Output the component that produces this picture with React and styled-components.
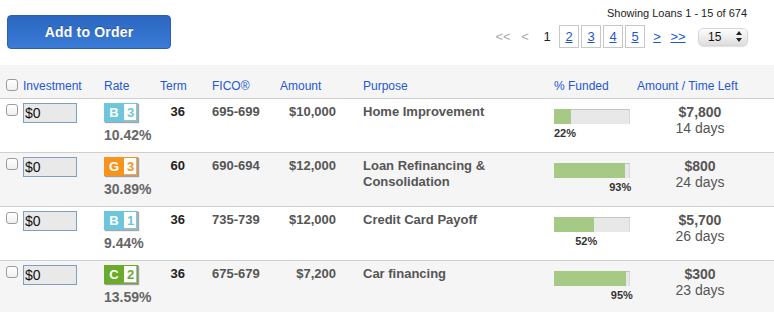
import React from 'react'
import styled, { createGlobalStyle } from 'styled-components'

const GlobalStyle = createGlobalStyle`
  body {
    margin: 0;
    background: #fff;
    font-family: 'Liberation Sans', Arial, Helvetica, sans-serif;
  }
`

const GRADES = {
  B: '#6ec6da',
  G: '#f7941e',
  C: '#6aab2c',
}

const loans = [
  { grade: 'B', sub: 3, rate: '10.42%', term: 36, fico: '695-699', amount: '$10,000', purpose: 'Home Improvement', funded: 22, left: '$7,800', days: '14 days' },
  { grade: 'G', sub: 3, rate: '30.89%', term: 60, fico: '690-694', amount: '$12,000', purpose: 'Loan Refinancing & Consolidation', funded: 93, left: '$800', days: '24 days' },
  { grade: 'B', sub: 1, rate: '9.44%', term: 36, fico: '735-739', amount: '$12,000', purpose: 'Credit Card Payoff', funded: 52, left: '$5,700', days: '26 days' },
  { grade: 'C', sub: 2, rate: '13.59%', term: 36, fico: '675-679', amount: '$7,200', purpose: 'Car financing', funded: 95, left: '$300', days: '23 days' },
]

const Page = styled.div`
  width: 774px;
  height: 312px;
  overflow: hidden;
`

const TopBar = styled.div`
  display: flex;
  justify-content: space-between;
  height: 65px;
  padding: 0 26px 0 7px;
  box-sizing: border-box;
`

const OrderButton = styled.button`
  margin-top: 15px;
  width: 164px;
  height: 34px;
  border: 1px solid #2a5fae;
  border-radius: 4px;
  background: linear-gradient(#2b66c0, #3a7cd6);
  color: #fff;
  font-family: inherit;
  font-size: 14px;
  font-weight: bold;
  letter-spacing: 0.2px;
  text-shadow: 0 -1px 0 rgba(0, 0, 0, 0.25);
  cursor: pointer;
`

const Paging = styled.div`
  display: flex;
  flex-direction: column;
  align-items: flex-end;
  padding-top: 7px;
`

const Showing = styled.div`
  font-size: 11px;
  line-height: 13px;
  color: #222;
  margin-right: 1px;
`

const Pager = styled.div`
  display: flex;
  align-items: center;
  margin-top: 5px;
  font-size: 13px;
`

const PageItem = styled.span`
  width: ${p => p.$w || 22}px;
  text-align: center;
  color: ${p => (p.$muted ? '#aaa' : '#222')};
`

const PageLink = styled.a`
  width: ${p => p.$w || 22}px;
  text-align: center;
  color: #2257cc;
  text-decoration: underline;
`

const PageBox = styled.a`
  box-sizing: border-box;
  width: 20px;
  height: 23px;
  margin: 0 1px;
  border: 1px solid #c8c8c8;
  display: flex;
  align-items: center;
  justify-content: center;
  color: #2257cc;
  text-decoration: underline;
`

const PerPage = styled.div`
  margin-left: 10px;
  width: 50px;
  height: 18px;
  box-sizing: border-box;
  border-radius: 5px;
  border: 1px solid #d6d6d6;
  background: linear-gradient(#fdfdfd, #dedede);
  box-shadow: 0 1px 1px rgba(0, 0, 0, 0.12);
  display: flex;
  align-items: center;
  justify-content: space-between;
  padding: 0 5px 0 9px;
  font-size: 12px;
  color: #111;
`

const Cols = styled.div`
  display: grid;
  grid-template-columns: 104px 56px 52px 68px 83px 191px 83px 1fr;
`

const HeadRow = styled(Cols)`
  height: 33px;
  background: #f5f5f5;
  border-bottom: 1px solid #cfcfcf;
  font-size: 12px;
  line-height: 14px;
`

const HeadCell = styled.div`
  padding-top: 14px;
  color: #2458d6;
  display: flex;
  align-items: flex-start;
  gap: 5px;
  padding-left: ${p => p.$pl || 0}px;
`

const Check = styled.input.attrs({ type: 'checkbox' })`
  appearance: none;
  margin: ${p => p.$mt || 0}px 0 0;
  width: 12px;
  height: 12px;
  border: 1px solid #9c9c9c;
  border-radius: 3px;
  background: linear-gradient(#fff, #f0f0f0);
  flex: none;
`

const Row = styled(Cols)`
  height: 53px;
  background: ${p => (p.$alt ? '#f5f5f5' : '#fff')};
  border-bottom: 1px solid #cfcfcf;
`

const Cell = styled.div`
  padding-top: ${p => p.$pt ?? 5}px;
  padding-right: ${p => p.$pr || 0}px;
  text-align: ${p => p.$align || 'left'};
  font-size: 13px;
  line-height: 16px;
  font-weight: bold;
  color: ${p => p.$color || '#555'};
`

const InvestCell = styled.div`
  display: flex;
  align-items: flex-start;
  gap: 5px;
  padding: 4px 0 0 6px;
`

const Amount = styled.input`
  box-sizing: border-box;
  width: 54px;
  height: 20px;
  margin: 0;
  padding: 0 1px;
  border: 1px solid #7f9fbf;
  background: #e9e9e9;
  font-family: inherit;
  font-size: 14px;
  color: #111;
`

const Badge = styled.div`
  display: flex;
  width: 34px;
  height: 19px;
  box-sizing: border-box;
  padding: 1px;
  background: ${p => p.$color};
  box-shadow: 1px 1px 1px rgba(0, 0, 0, 0.35);
`

const Letter = styled.span`
  width: 18px;
  text-align: center;
  color: #fff;
  font-size: 13px;
  line-height: 17px;
  font-weight: bold;
`

const Sub = styled.span`
  flex: 1;
  margin-left: 1px;
  background: #fff;
  box-shadow: inset -1px -1px 0 #b5b5b5;
  text-align: center;
  color: ${p => p.$color};
  font-size: 13px;
  line-height: 17px;
  font-weight: bold;
`

const RateText = styled.div`
  margin-top: 5px;
  font-size: 14px;
  line-height: 17px;
  font-weight: bold;
  color: #666;
`

const Track = styled.div`
  width: 76px;
  height: 15px;
  background: #e8e8e8;
  box-shadow: inset 0 1px 0 #c4c4c4, inset -1px 0 0 #d8d8d8;
`

const Fill = styled.div`
  height: 100%;
  background: #a6ca85;
`

const FundLabel = styled.div`
  min-width: max-content;
  margin-top: 3px;
  text-align: right;
  font-size: 11px;
  line-height: 13px;
  font-weight: bold;
  color: #333;
`

const LeftCell = styled.div`
  padding: 5px 11px 0 0;
  text-align: center;
  color: #555;
`

const LeftAmount = styled.div`
  font-size: 14px;
  line-height: 16px;
  font-weight: bold;
`

const Days = styled.div`
  font-size: 14px;
  line-height: 16px;
`

const Arrows = () => (
  <svg width="6" height="11" viewBox="0 0 6 11">
    <path d="M3 0 L6 4 L0 4 Z M3 11 L6 7 L0 7 Z" fill="#222" />
  </svg>
)

const LoanRow = ({ loan, alt }) => {
  const color = GRADES[loan.grade]
  return (
    <Row $alt={alt}>
      <InvestCell>
        <Check $mt={1} />
        <Amount readOnly value="$0" />
      </InvestCell>
      <Cell $pt={4}>
        <Badge $color={color}>
          <Letter>{loan.grade}</Letter>
          <Sub $color={color}>{loan.sub}</Sub>
        </Badge>
        <RateText>{loan.rate}</RateText>
      </Cell>
      <Cell $align="right" $pr={27} $color="#222">{loan.term}</Cell>
      <Cell>{loan.fico}</Cell>
      <Cell $align="right" $pr={27}>{loan.amount}</Cell>
      <Cell $pr={20}>{loan.purpose}</Cell>
      <Cell $pt={10}>
        <Track>
          <Fill style={{ width: `${loan.funded}%` }} />
        </Track>
        <FundLabel style={{ width: `${loan.funded}%` }}>{loan.funded}%</FundLabel>
      </Cell>
      <LeftCell>
        <LeftAmount>{loan.left}</LeftAmount>
        <Days>{loan.days}</Days>
      </LeftCell>
    </Row>
  )
}

const App = () => (
  <Page>
    <GlobalStyle />
    <TopBar>
      <OrderButton type="button">Add to Order</OrderButton>
      <Paging>
        <Showing>Showing Loans 1 - 15 of 674</Showing>
        <Pager>
          <PageItem $muted>&lt;&lt;</PageItem>
          <PageItem $muted>&lt;</PageItem>
          <PageItem>1</PageItem>
          {[2, 3, 4, 5].map(n => (
            <PageBox key={n}>{n}</PageBox>
          ))}
          <PageLink>&gt;</PageLink>
          <PageLink $w={20}>&gt;&gt;</PageLink>
          <PerPage>
            <span>15</span>
            <Arrows />
          </PerPage>
        </Pager>
      </Paging>
    </TopBar>

    <HeadRow>
      <HeadCell $pl={6}>
        <Check />
        <span>Investment</span>
      </HeadCell>
      <HeadCell>Rate</HeadCell>
      <HeadCell>Term</HeadCell>
      <HeadCell>FICO®</HeadCell>
      <HeadCell>Amount</HeadCell>
      <HeadCell>Purpose</HeadCell>
      <HeadCell>% Funded</HeadCell>
      <HeadCell>Amount / Time Left</HeadCell>
    </HeadRow>

    {loans.map((loan, i) => (
      <LoanRow key={i} loan={loan} alt={i % 2 === 1} />
    ))}
  </Page>
)

export default App
